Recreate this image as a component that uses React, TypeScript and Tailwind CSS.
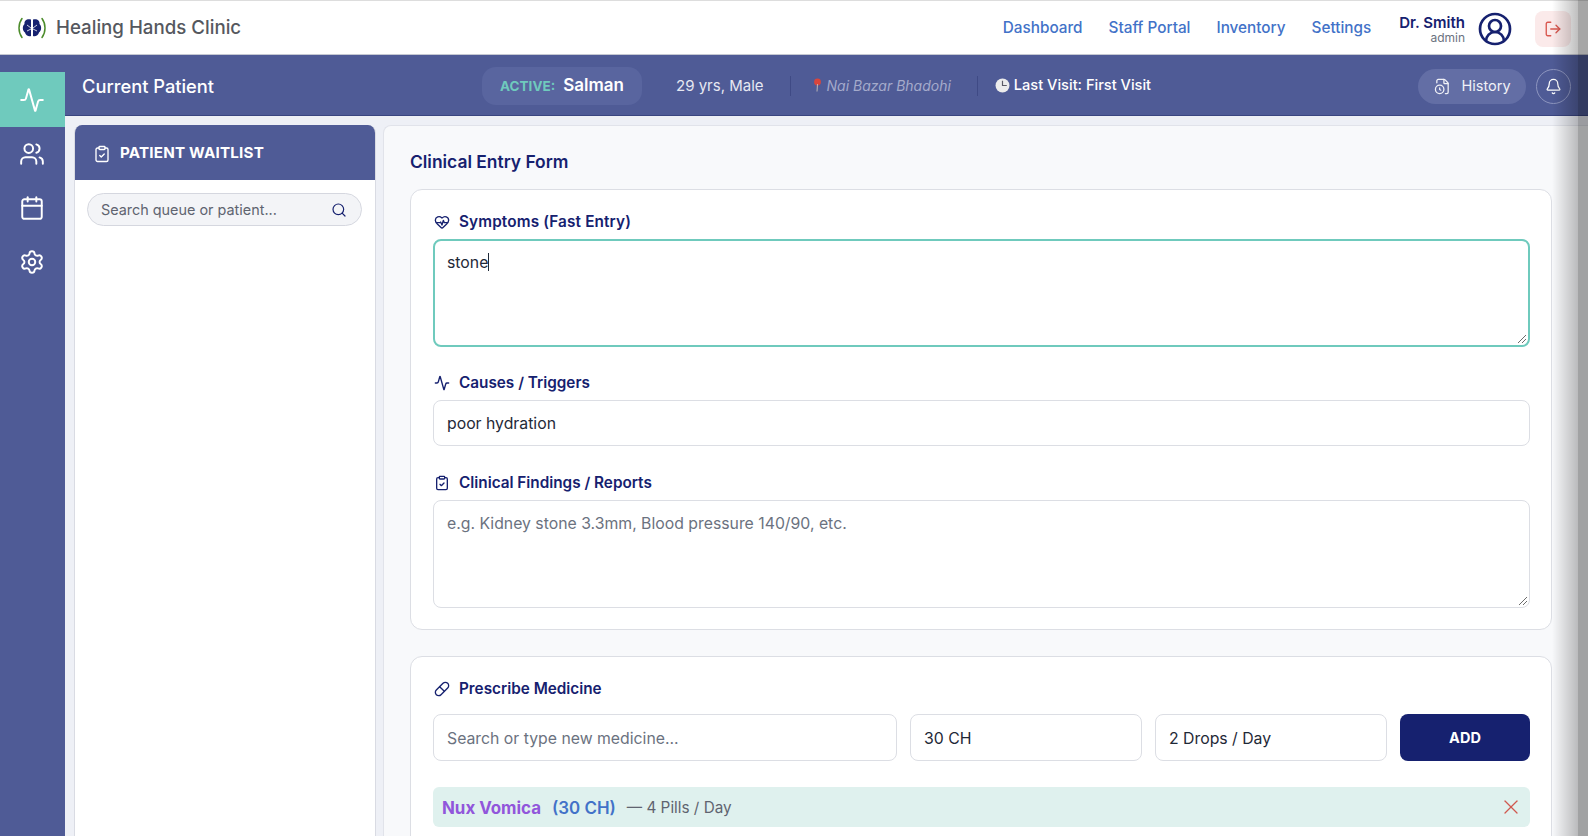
import { Activity, Bell, Calendar, CircleUserRound, ClipboardCheck, FileClock, HeartPulse, LogOut, Pill, Search, Settings, Users, X } from "lucide-react";

const navLinks = ["Dashboard", "Staff Portal", "Inventory", "Settings"];

function Logo() {
	return (
		<svg viewBox="0 0 30 24" className="w-[30px] h-[24px] shrink-0">
			<path d="M5 2.500C1 8 1 16 5 21.500" fill="none" stroke="#4c8c2b" strokeWidth="1.500" strokeLinecap="round" />
			<path d="M25 2.500C29 8 29 16 25 21.500" fill="none" stroke="#4c8c2b" strokeWidth="1.500" strokeLinecap="round" />
			<path d="M14 3.500C10 2.500 7 4.500 7.500 8C5 10 5.500 15 8 16.500C8.500 19.500 12 21 14 20Z" fill="#16216f" />
			<path d="M16 3.500C20 2.500 23 4.500 22.500 8C25 10 24.500 15 22 16.500C21.500 19.500 18 21 16 20Z" fill="#16216f" />
			<path d="M15 4V21M10 9L14 12M20 9L16 12M10 15L14 13M20 15L16 13" stroke="#ffffff" strokeWidth="0.800" fill="none" />
		</svg>
	);
}

function FieldLabel({ icon: Icon, text, wide }: { icon: typeof Pill; text: string; wide?: boolean }) {
	return (
		<div className={wide ? "flex items-center gap-[9px] pl-px text-[15.300px] leading-[20px] font-semibold tracking-[0.15px] text-[#16216f]" : "flex items-center gap-[9px] pl-px text-[15.300px] leading-[20px] font-semibold text-[#16216f]"}>
			<Icon className="w-4 h-4 text-[#16216f]" strokeWidth={2} />
			<span>{text}</span>
		</div>
	);
}

function Grip() {
	return (
		<svg viewBox="0 0 10 10" className="absolute right-[1px] bottom-[1px] w-[10px] h-[10px]">
			<path d="M1 9L9 1M5 9L9 5" stroke="#6b6b6b" strokeWidth="1" />
		</svg>
	);
}

export default function App() {
	return (
		<div className="relative h-[836px] w-[1588px] overflow-hidden flex flex-col bg-[#eef0f6] font-['Inter',sans-serif]">
			{/* Top nav */}
			<header className="h-[55px] shrink-0 flex items-center justify-between bg-white border-t border-t-[#dddddd] border-b border-b-[#c5c8d2] pt-[2px] pl-[17px] pr-[17px]">
				<div className="flex items-center gap-[9px]">
					<Logo />
					<span className="text-[18.700px] font-medium text-[#55585e]">Healing Hands Clinic</span>
				</div>
				<div className="flex items-center">
					<nav className="flex items-center gap-[26px] text-[15.300px] font-medium text-[#4272c8]">
						{navLinks.map((link) => (
							<a key={link}>{link}</a>
						))}
					</nav>
					<div className="ml-[28px] flex flex-col items-end">
						<span className="text-[15px] leading-[17px] font-semibold text-[#16216f]">Dr. Smith</span>
						<span className="text-[12px] leading-[13px] text-[#6b7280]">admin</span>
					</div>
					<CircleUserRound className="ml-[12px] w-[36px] h-[36px] text-[#16216f]" strokeWidth={1.800} />
					<button className="ml-[22px] w-[36px] h-[36px] rounded-lg bg-[#fbeaea] flex items-center justify-center">
						<LogOut className="w-[18px] h-[18px] text-[#d9574f]" strokeWidth={1.800} />
					</button>
				</div>
			</header>

			<div className="flex-1 flex min-h-0">
				{/* Icon rail */}
				<aside className="w-[65px] shrink-0 bg-[#4f5b96] pt-[17px] flex flex-col text-white">
					<div className="h-[55px] bg-[#6fcabd] flex items-center justify-center pr-[2px]">
						<Activity className="w-[26px] h-[26px]" strokeWidth={1.800} />
					</div>
					<div className="h-[53px] flex items-center justify-center pr-[2px]">
						<Users className="w-[26px] h-[26px]" strokeWidth={1.800} />
					</div>
					<div className="h-[55px] flex items-center justify-center pr-[2px]">
						<Calendar className="w-[26px] h-[26px]" strokeWidth={1.800} />
					</div>
					<div className="h-[54px] flex items-center justify-center pr-[2px]">
						<Settings className="w-[26px] h-[26px]" strokeWidth={1.800} />
					</div>
				</aside>

				<div className="flex-1 min-w-0 flex flex-col">
					{/* Patient bar */}
					<div className="relative h-[61px] shrink-0 bg-[#4f5b96] border-b border-[#3a4580] flex items-center pt-[2px] pl-[17px] pr-[17px] text-white">
						<h2 className="w-[400px] pt-[1px] text-[18.300px] font-medium">Current Patient</h2>
						<div className="h-[38px] w-[160px] rounded-[14px] bg-[#59659f] flex items-center justify-center gap-[8px]">
							<span className="text-[13.500px] font-bold text-[#6fcabd]">ACTIVE:</span>
							<span className="text-[17px] font-semibold">Salman</span>
						</div>
						<span className="ml-[34px] text-[15px] text-[#e6e8f2]">29 yrs, Male</span>
						<span className="ml-[26px] w-px h-[20px] bg-[#3f4a85]" />
						<svg viewBox="0 0 8 14" className="ml-[22px] mb-[2px] w-[9px] h-[14px]">
							<circle cx="4" cy="4" r="3.400" fill="#d9453c" />
							<path d="M4 6L3.500 13.500" stroke="#b9b4b4" strokeWidth="1" />
						</svg>
						<span className="ml-[5px] mb-[2px] text-[14px] italic text-[#a4aacb]">Nai Bazar Bhadohi</span>
						<span className="ml-[26px] w-px h-[20px] bg-[#3f4a85]" />
						<svg viewBox="0 0 14 14" className="ml-[17px] mb-[1px] w-[15px] h-[15px]">
							<circle cx="7" cy="7" r="6.500" fill="#ececec" />
							<path d="M7 2.500V7H11" stroke="#5b5b66" strokeWidth="1.100" fill="none" />
						</svg>
						<span className="ml-[4px] mb-[1px] text-[14.600px] font-medium">Last Visit: First Visit</span>
						<div className="ml-auto flex items-center gap-[10px]">
							<button className="h-[35px] w-[108px] rounded-full bg-[#636ea5] flex items-center justify-center gap-[10px] pl-px text-[14.500px] text-[#f0f1f7]">
								<FileClock className="w-[17px] h-[17px]" strokeWidth={1.800} />
								History
							</button>
							<button className="w-[35px] h-[35px] rounded-full border border-[#8d95bf] flex items-center justify-center">
								<Bell className="w-[17px] h-[17px]" strokeWidth={1.800} />
							</button>
						</div>
					</div>

					<div className="flex-1 min-h-0 flex pl-[9px] pt-[9px] gap-[7px]">
						{/* Waitlist */}
						<section className="w-[302px] shrink-0 rounded-t-lg border-x border-[#d9dbe3] bg-white overflow-hidden">
							<div className="h-[55px] bg-[#4f5b96] flex items-center gap-[9px] pt-[2px] pl-[18px] text-white">
								<ClipboardCheck className="w-[18px] h-[18px]" strokeWidth={1.800} />
								<span className="text-[15.200px] font-bold tracking-[0.2px]">PATIENT WAITLIST</span>
							</div>
							<div className="pl-[12px] pr-[13px] pt-[13px]">
								<div className="h-[33px] rounded-full border border-[#d5d7df] bg-[#f3f4f7] flex items-center justify-between pl-[13px] pr-[14px]">
									<span className="text-[14.400px] text-[#5f6470]">Search queue or patient...</span>
									<Search className="w-[16px] h-[16px] text-[#16216f]" strokeWidth={1.800} />
								</div>
							</div>
						</section>

						{/* Clinical form */}
						<main className="flex-1 min-w-0 rounded-tl-lg border-l border-t border-[#e1e3ea] bg-[#f8f9fb] pl-[26px] pr-[36px] pt-[24px] overflow-hidden">
							<h3 className="text-[17.400px] leading-[24px] font-semibold text-[#16216f] mb-[15px]">Clinical Entry Form</h3>

							<div className="h-[441px] rounded-xl border border-[#dcdee4] bg-white pl-[22px] pr-[21px] pt-[22px]">
								<FieldLabel icon={HeartPulse} text="Symptoms (Fast Entry)" wide />
								<div className="relative mt-[7px] h-[108px] rounded-lg border-2 border-[#6fcabd] px-[12px] pt-[11px] text-[15.800px] leading-[22px] text-[#1f2937]">
									stone<span className="inline-block w-px h-[18px] bg-[#1f2937] align-[-3px]" />
									<Grip />
								</div>
								<div className="mt-[26px]">
									<FieldLabel icon={Activity} text="Causes / Triggers" />
								</div>
								<div className="mt-[7px] h-[46px] rounded-lg border border-[#dcdee4] flex items-center pt-[2px] px-[13px] text-[15.800px] text-[#1f2937]">poor hydration</div>
								<div className="mt-[27px]">
									<FieldLabel icon={ClipboardCheck} text="Clinical Findings / Reports" />
								</div>
								<div className="relative mt-[7px] h-[108px] rounded-lg border border-[#dcdee4] px-[13px] pt-[12px] text-[15.800px] leading-[22px] text-[#6b7280]">
									e.g. Kidney stone 3.3mm, Blood pressure 140/90, etc.
									<Grip />
								</div>
							</div>

							<div className="mt-[26px] rounded-xl border border-[#dcdee4] bg-white pl-[22px] pr-[21px] pt-[22px] pb-[20px]">
								<FieldLabel icon={Pill} text="Prescribe Medicine" />
								<div className="mt-[15px] flex gap-[13px] text-[15.800px]">
									<div className="w-[464px] h-[47px] rounded-lg border border-[#dcdee4] flex items-center pt-[2px] px-[13px] text-[#6b7280]">Search or type new medicine...</div>
									<div className="w-[232px] h-[47px] rounded-lg border border-[#dcdee4] flex items-center pt-[2px] px-[13px] text-[#1f2937]">30 CH</div>
									<div className="w-[232px] h-[47px] rounded-lg border border-[#dcdee4] flex items-center pt-[2px] px-[13px] text-[#1f2937]">2 Drops / Day</div>
									<button className="flex-1 h-[47px] rounded-lg bg-[#16216f] text-[14.500px] font-bold text-white">ADD</button>
								</div>
								<div className="mt-[26px] h-[40px] rounded-md bg-[#dff1ee] flex items-center pl-[9px] pr-[7px]">
									<span className="pt-[3px] text-[16.900px] font-bold text-[#9156db]">Nux Vomica</span>
									<span className="ml-[11px] pt-[3px] text-[16.900px] font-semibold text-[#4272c8]">(30 CH)</span>
									<span className="ml-[11px] pt-[3px] text-[15.300px] text-[#5f6470]">— 4 Pills / Day</span>
									<X className="ml-auto w-[24px] h-[24px] text-[#d0584f]" strokeWidth={1.300} />
								</div>
							</div>
						</main>
					</div>
				</div>
			</div>

			{/* Edge shadow over the right of the page */}
			<div className="absolute top-0 right-0 bottom-0 w-[36px] flex pointer-events-none">
				<div className="w-[26px] bg-gradient-to-r from-black/0 to-black/25" />
				<div className="w-[10px] bg-black/35" />
			</div>
		</div>
	);
}
